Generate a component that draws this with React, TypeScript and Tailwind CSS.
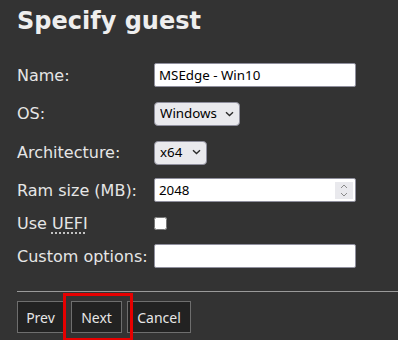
import React from 'react';

function Chevron() {
  return (
    <svg width="9" height="6" viewBox="0 0 9 6" className="pointer-events-none absolute right-[6px] top-1/2 -translate-y-1/2">
      <path d="M1 1.2 L4.5 4.5 L8 1.2" fill="none" stroke="#2b2b2b" strokeWidth="1.4" />
    </svg>
  );
}

function Select({ value, width }: { value: string; width: string }) {
  return (
    <div className={`relative ${width}`}>
      <select
        defaultValue={value}
        className="w-full h-[24px] appearance-none rounded-[4px] border border-[#8f8f9d] bg-[#e9e9ed] pl-[5px] pr-[20px] font-['Noto_Sans',sans-serif] text-[13.33px] text-black outline-none"
      >
        <option>{value}</option>
      </select>
      <Chevron />
    </div>
  );
}

const inputCls =
  "w-[202px] h-[24px] rounded-[2px] border border-[#8f8f9d] bg-white px-[4px] font-['Noto_Sans',sans-serif] text-[13.33px] text-black outline-none";

export default function App() {
  return (
    <div className="h-[340px] w-full overflow-hidden bg-[#333333] pt-[7px] font-['DejaVu_Sans',sans-serif] text-[#e6e6e6]">
      <h1 className="pl-[17px] text-[24px] font-bold leading-[28px] text-[#eeeeee]">Specify guest</h1>

      <form className="mt-[21px] flex flex-col pl-[17px]">
        <div className="flex h-[38px] items-center">
          <label className="w-[137px] text-[16px] leading-[19px]">Name:</label>
          <input type="text" defaultValue="MSEdge - Win10" className={inputCls} />
        </div>
        <div className="flex h-[39px] items-center">
          <label className="w-[137px] text-[16px] leading-[19px]">OS:</label>
          <Select value="Windows" width="w-[86px]" />
        </div>
        <div className="flex h-[38px] items-center">
          <label className="w-[137px] text-[16px] leading-[19px]">Architecture:</label>
          <Select value="x64" width="w-[53px]" />
        </div>
        <div className="flex h-[38px] items-center">
          <label className="w-[137px] text-[16px] leading-[19px]">Ram size (MB):</label>
          <div className="relative">
            <input type="text" defaultValue="2048" className={inputCls} />
            <div className="pointer-events-none absolute right-[3px] top-[4px] flex h-[17px] w-[18px] flex-col items-center justify-center gap-[3px] bg-[#e9e9ed]">
              <svg width="8" height="5" viewBox="0 0 8 5">
                <path d="M1 4 L4 1 L7 4" fill="none" stroke="#8a8a8a" strokeWidth="1" />
              </svg>
              <svg width="8" height="5" viewBox="0 0 8 5">
                <path d="M1 1 L4 4 L7 1" fill="none" stroke="#8a8a8a" strokeWidth="1" />
              </svg>
            </div>
          </div>
        </div>
        <div className="flex h-[28px] items-center">
          <label className="w-[137px] text-[16px] leading-[19px]">
            Use{' '}
            <abbr title="Unified Extensible Firmware Interface" className="underline decoration-dotted underline-offset-[4px]">
              UEFI
            </abbr>
          </label>
          <input type="checkbox" className="m-0 h-[13px] w-[13px]" />
        </div>
        <div className="flex h-[38px] items-center">
          <label className="w-[137px] text-[16px] leading-[19px]">Custom options:</label>
          <input type="text" className={inputCls} />
        </div>
      </form>

      <div className="ml-[17px] mt-[16px] border-t border-[#9a9a9a]" />

      <div className="ml-[17px] mt-[9px] flex items-start font-['Noto_Sans',sans-serif] text-[14px]">
        <button className="h-[32px] w-[47px] border border-[#6e6e6e] bg-[#222222] text-[#e6e6e6]">Prev</button>
        <div className="relative ml-[7px]">
          <button className="h-[32px] w-[51px] border border-[#6e6e6e] bg-[#222222] text-[#e6e6e6]">Next</button>
          <div className="pointer-events-none absolute left-[-8px] top-[-8px] h-[48px] w-[70px] border-[3px] border-[#e60000]" />
        </div>
        <button className="ml-[5px] h-[32px] w-[64px] border border-[#6e6e6e] bg-[#222222] text-[#e6e6e6]">Cancel</button>
      </div>
    </div>
  );
}
